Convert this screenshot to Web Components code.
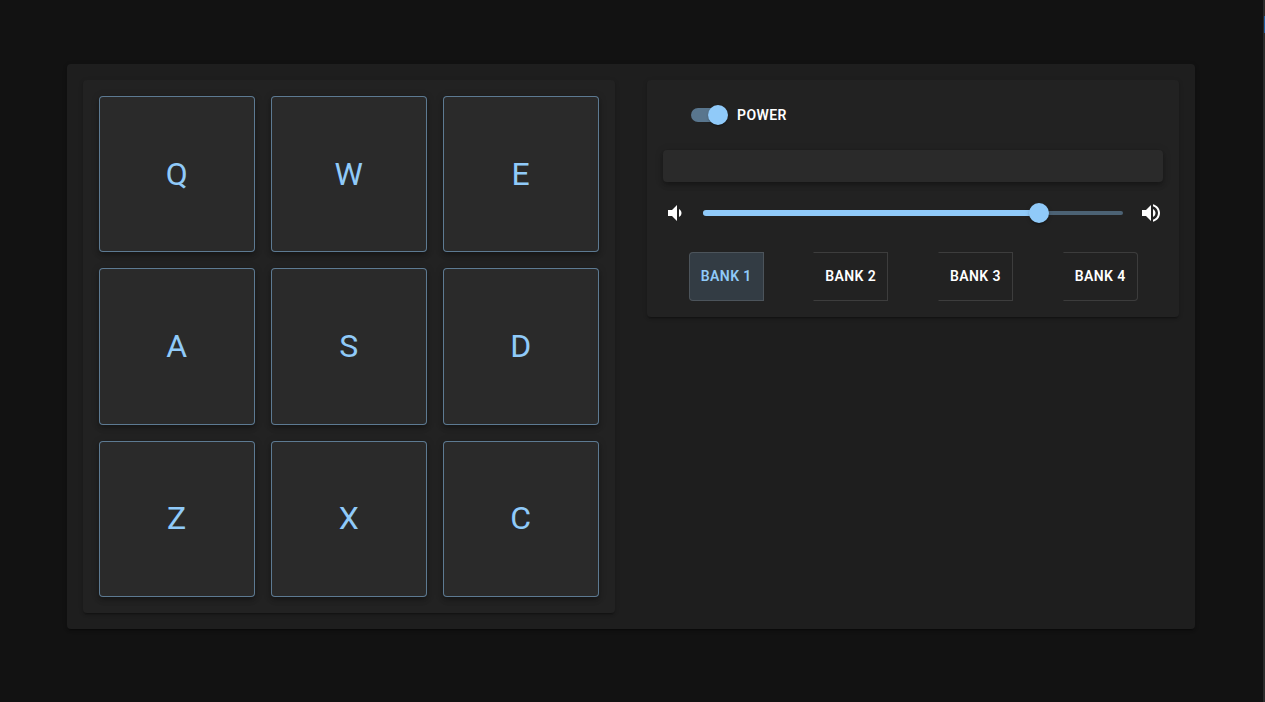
<!DOCTYPE html>
<html lang="en"><head><meta charset="utf-8"><title>Drum Machine</title>
<style>
html,body{margin:0;height:100%;background:#121212;overflow:hidden}
body{font-family:Roboto,"Liberation Sans",sans-serif;color:#fff}
</style></head>
<body>
<drum-machine>
  <pad-grid slot="left">
    <drum-pad>Q</drum-pad><drum-pad>W</drum-pad><drum-pad>E</drum-pad>
    <drum-pad>A</drum-pad><drum-pad>S</drum-pad><drum-pad>D</drum-pad>
    <drum-pad>Z</drum-pad><drum-pad>X</drum-pad><drum-pad>C</drum-pad>
  </pad-grid>
  <control-panel slot="right">
    <power-switch>POWER</power-switch>
    <display-bar></display-bar>
    <volume-slider value="80"></volume-slider>
    <bank-group>
      <bank-button selected first>BANK 1</bank-button>
      <bank-button>BANK 2</bank-button>
      <bank-button>BANK 3</bank-button>
      <bank-button last>BANK 4</bank-button>
    </bank-group>
  </control-panel>
</drum-machine>
<scroll-mark></scroll-mark>
<script>
function def(name, css, html, init){
  customElements.define(name, class extends HTMLElement{
    constructor(){super();this.attachShadow({mode:'open'}).innerHTML='<style>'+css+'</style>'+html;}
    connectedCallback(){ if(init) init(this); }
  });
}
const shadow2='0 3px 1px -2px rgba(0,0,0,.2),0 2px 2px 0 rgba(0,0,0,.14),0 1px 5px 0 rgba(0,0,0,.12)';
const shadow4='0 2px 4px -1px rgba(0,0,0,.2),0 4px 5px 0 rgba(0,0,0,.14),0 1px 10px 0 rgba(0,0,0,.12)';

def('drum-machine',`
  :host{display:flex;justify-content:center;width:1262px;padding-top:64px}
  .outer{width:1096px;padding:16px;background:#1e1e1e;border-radius:4px;box-shadow:${shadow2};
    display:grid;grid-template-columns:532px 532px;gap:32px;align-items:start}
`,`<div class="outer"><slot name="left"></slot><slot name="right"></slot></div>`);

def('pad-grid',`
  :host{display:grid;grid-template-columns:repeat(3,156px);gap:16px;padding:16px;background:#222;border-radius:4px;box-shadow:${shadow2}}
`,`<slot></slot>`);

def('drum-pad',`
  :host{display:flex;align-items:center;justify-content:center;box-sizing:border-box;height:156.33px;padding-bottom:1px;
    background:#2a2a2a;border:1px solid rgba(144,202,249,.5);border-radius:4px;box-shadow:${shadow4};
    color:#90caf9;font-size:32px;font-weight:400;line-height:1.75;letter-spacing:.6px}
`,`<slot></slot>`);

def('control-panel',`
  :host{display:flex;flex-direction:column;padding:16px 16px 16.5px;background:#222;border-radius:4px;box-shadow:${shadow2}}
`,`<slot></slot>`);

def('power-switch',`
  :host{display:flex;align-items:center;height:38px;padding-left:16px;margin-bottom:16px;font-size:14px;font-weight:600;letter-spacing:.4px}
  .sw{position:relative;width:58px;height:38px;flex:none}
  .track{position:absolute;left:12px;top:12px;width:34px;height:14px;border-radius:7px;background:#90caf9;opacity:.5}
  .thumb{position:absolute;left:29px;top:9px;width:20px;height:20px;border-radius:50%;background:#90caf9;box-shadow:0 2px 1px -1px rgba(0,0,0,.2),0 1px 1px 0 rgba(0,0,0,.14),0 1px 3px 0 rgba(0,0,0,.12)}
`,`<span class="sw"><span class="track"></span><span class="thumb"></span></span><slot></slot>`);

def('display-bar',`
  :host{display:block;height:32px;margin-bottom:16px;background:#2a2a2a;border-radius:4px;box-shadow:${shadow4}}
`,``);

def('volume-slider',`
  :host{display:flex;align-items:center;height:30px;gap:16px;margin-bottom:24px}
  svg{width:24px;height:24px;fill:#fff;flex:none;display:block}
  .rail{position:relative;flex:1;height:6px}
  .rest{position:absolute;left:0;right:0;top:1px;height:4px;border-radius:2px;background:#90caf9;opacity:.38}
  .fill{position:absolute;left:0;top:0;height:6px;width:80%;border-radius:3px;background:#90caf9}
  .knob{position:absolute;left:80%;top:3px;width:20px;height:20px;margin:-10px 0 0 -10px;border-radius:50%;background:#90caf9;box-shadow:0 3px 1px -2px rgba(0,0,0,.2),0 2px 2px 0 rgba(0,0,0,.14),0 1px 5px 0 rgba(0,0,0,.12)}
`,`<svg viewBox="0 0 24 24"><path d="M18.5 12c0-1.77-1.02-3.29-2.5-4.03v8.05c1.48-.73 2.5-2.25 2.5-4.02zM5 9v6h4l5 5V4L9 9H5z"/></svg>
<div class="rail"><div class="rest"></div><div class="fill"></div><div class="knob"></div></div>
<svg viewBox="0 0 24 24"><path d="M3 9v6h4l5 5V4L7 9H3zm13.5 3c0-1.77-1.02-3.29-2.5-4.03v8.05c1.48-.73 2.5-2.25 2.5-4.02zM14 3.23v2.06c2.89.86 5 3.54 5 6.71s-2.11 5.85-5 6.71v2.06c4.01-.91 7-4.49 7-8.77s-2.99-7.86-7-8.77z"/></svg>`);

def('bank-group',`
  :host{display:flex;justify-content:space-around}
`,`<slot></slot>`);

def('bank-button',`
  :host{display:block;box-sizing:border-box;padding:11px;border:1px solid rgba(255,255,255,.12);border-left-color:transparent;margin-left:-1px;
    font-size:14px;font-weight:600;line-height:1.75;letter-spacing:.02857em;color:#fff}
  :host([first]){margin-left:.4px;margin-right:-.4px;border-left-color:rgba(255,255,255,.12);border-radius:4px 0 0 4px}
  :host([last]){border-radius:0 4px 4px 0}
  :host([selected]){color:#90caf9;background:rgba(144,202,249,.16)}
`,`<slot></slot>`);

def('scroll-mark',`
  :host{position:fixed;right:0;top:0;bottom:0;width:2px;background:#2b2b2b}
  i{position:absolute;right:0;top:16px;width:1px;height:17px;background:#1f5f9e}
`,`<i></i>`);
</script>
</body></html>
